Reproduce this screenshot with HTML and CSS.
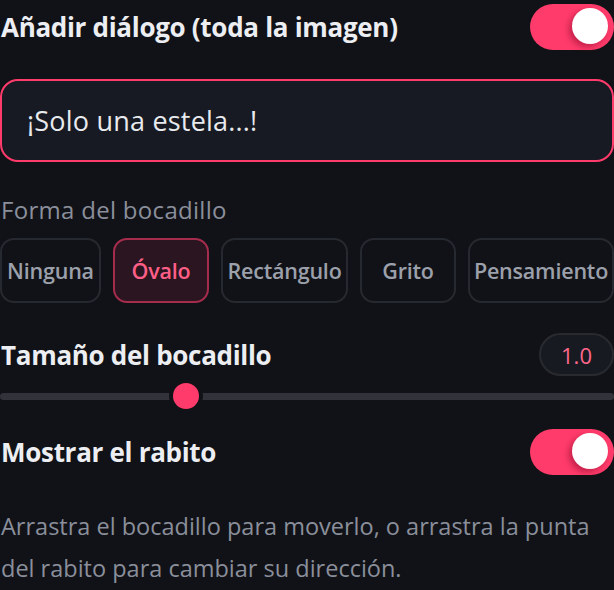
FILE: index.html
```html
<!DOCTYPE html>
<html lang="es">
<head>
<meta charset="utf-8">
<title>Diálogo</title>
<link rel="stylesheet" href="styles.css">
</head>
<body>
<div class="panel">
  <div class="row row-top">
    <span class="heading">Añadir diálogo (toda la imagen)</span>
    <span class="toggle"><span class="knob"></span></span>
  </div>
  <div class="input">¡Solo una estela...!</div>
  <div class="label">Forma del bocadillo</div>
  <div class="options">
    <div class="opt">Ninguna</div>
    <div class="opt active">Óvalo</div>
    <div class="opt">Rectángulo</div>
    <div class="opt">Grito</div>
    <div class="opt">Pensamiento</div>
  </div>
  <div class="row row-size">
    <span class="heading">Tamaño del bocadillo</span>
    <span class="pill">1.0</span>
  </div>
  <div class="slider">
    <div class="track"></div>
    <div class="thumb" style="left:173px"></div>
  </div>
  <div class="row row-tail">
    <span class="heading">Mostrar el rabito</span>
    <span class="toggle"><span class="knob"></span></span>
  </div>
  <p class="hint">Arrastra el bocadillo para moverlo, o arrastra la punta del rabito para cambiar su dirección.</p>
</div>
</body>
</html>
```
FILE: styles.css
```css
html, body {
  margin: 0;
  padding: 0;
  background: #111217;
}
body {
  font-family: "Open Sans", "Noto Sans", sans-serif;
  color: #eceef2;
  width: 614px;
  height: 590px;
  overflow: hidden;
}
.panel {
  display: flex;
  flex-direction: column;
}
.row {
  display: flex;
  justify-content: space-between;
  align-items: center;
}
.row-top { height: 54px; }
.heading {
  font-size: 26px;
  font-weight: 700;
  padding-left: 1px;
  letter-spacing: -0.3px;
}
.toggle {
  width: 84px;
  height: 46px;
  border-radius: 23px;
  background: #ff3b6b;
  display: flex;
  align-items: center;
  justify-content: flex-end;
  padding-right: 6px;
  box-sizing: border-box;
}
.knob {
  width: 36px;
  height: 36px;
  border-radius: 50%;
  background: #ffffff;
  margin-top: -2px;
  box-shadow: -3px 3px 6px rgba(120, 0, 30, 0.45);
}
.input {
  margin-top: 25px;
  height: 83px;
  box-sizing: border-box;
  border: 2px solid #ff3b6b;
  border-radius: 18px;
  background: #171a22;
  display: flex;
  align-items: center;
  padding-left: 25px;
  font-size: 27px;
  letter-spacing: 0.2px;
  color: #e8eaee;
}
.label {
  margin-top: 33px;
  line-height: 30px;
  font-size: 24px;
  letter-spacing: 0.3px;
  color: #8a8f9b;
  padding-left: 1px;
}
.options {
  margin-top: 13px;
  display: grid;
  grid-template-columns: 101px 96px 127px 96px 1fr;
  column-gap: 12px;
  height: 65px;
}
.opt {
  box-sizing: border-box;
  border: 2px solid #272930;
  border-radius: 14px;
  display: flex;
  align-items: center;
  justify-content: center;
  font-size: 21.5px;
  font-weight: 600;
  color: #9ba0ab;
  letter-spacing: -0.2px;
}
.opt.active {
  background: #2a1520;
  border-color: #a62c4d;
  color: #ff5f87;
}
.row-size {
  margin-top: 30px;
  height: 43px;
}
.pill {
  width: 75px;
  height: 43px;
  box-sizing: border-box;
  border: 2px solid #282a30;
  border-radius: 22px;
  background: #171a21;
  display: flex;
  align-items: center;
  justify-content: center;
  font-size: 22px;
  color: #ff678c;
}
.slider {
  position: relative;
  margin-top: 7px;
  height: 26px;
  display: flex;
  align-items: center;
}
.track {
  width: 100%;
  height: 7px;
  border-radius: 4px;
  background: #32333a;
}
.thumb {
  position: absolute;
  top: 0;
  width: 26px;
  height: 26px;
  border-radius: 50%;
  background: #ff3b6b;
  box-shadow: 0 0 0 4px #111217;
}
.row-tail {
  margin-top: 19px;
  height: 48px;
}
.hint {
  margin: 29px 0 0;
  font-size: 23.5px;
  line-height: 42px;
  color: #8a8f9b;
  padding-left: 1px;
}
```
